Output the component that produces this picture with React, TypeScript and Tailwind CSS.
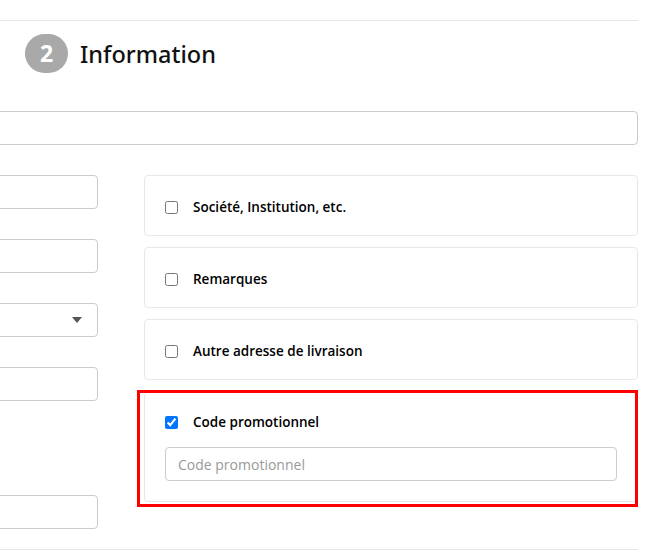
export default function App() {
  return (
    <div className="h-[556px] w-[650px] overflow-hidden bg-white font-['Open_Sans','Noto_Sans',sans-serif] text-[14px] text-black">
      <div className="-ml-[200px] w-[838px] pt-5">
        {/* Step header */}
        <div className="border-t border-[#e6e6e6] pt-[13px]">
          <div className="flex items-center gap-3 pl-[225px]">
            <span className="flex h-[39px] w-[43px] items-center justify-center rounded-full bg-[#a9a9a9] text-[23px] font-bold text-white">
              2
            </span>
            <h2 className="font-['Noto_Sans',sans-serif] text-[23.5px] font-medium leading-[30px] text-[#111]">
              Information
            </h2>
          </div>

          <input className="mt-[38px] block h-[34px] w-full rounded border border-[#cccccc] px-3 outline-none" />

          <div className="mt-[30px] flex gap-[46px]">
            {/* Left column */}
            <div className="flex w-[298px] flex-col gap-[30px]">
              <input className="block h-[34px] w-full rounded border border-[#cccccc] px-3 outline-none" />
              <input className="block h-[34px] w-full rounded border border-[#cccccc] px-3 outline-none" />
              <div className="flex h-[34px] w-full items-center justify-end rounded border border-[#cccccc] pr-[15px]">
                <svg width="10" height="6" viewBox="0 0 10 6">
                  <path d="M0 0h10L5 6z" fill="#555" />
                </svg>
              </div>
              <input className="block h-[34px] w-full rounded border border-[#cccccc] px-3 outline-none" />
              <div className="h-[34px]" />
              <input className="block h-[34px] w-full rounded border border-[#cccccc] px-3 outline-none" />
            </div>

            {/* Right column */}
            <div className="flex flex-1 flex-col gap-[11px]">
              {["Société, Institution, etc.", "Remarques", "Autre adresse de livraison"].map((label) => (
                <label
                  key={label}
                  className="flex h-[61px] items-center gap-[15px] rounded-sm border border-[#e8e8e8] pl-5 pt-[3px] text-[13.5px] font-semibold"
                >
                  <input type="checkbox" className="m-0 mt-[1px] h-[13px] w-[13px]" />
                  <span>{label}</span>
                </label>
              ))}

              <div className="relative rounded-sm border border-[#e8e8e8] px-5 pb-5 pt-[19px]">
                <label className="flex h-[22px] items-center gap-[15px] text-[13.5px] font-semibold">
                  <input type="checkbox" defaultChecked className="m-0 mt-[1px] h-[13px] w-[13px]" />
                  <span>Code promotionnel</span>
                </label>
                <input
                  placeholder="Code promotionnel"
                  className="mt-[14px] block h-[34px] w-full rounded border border-[#cccccc] px-3 placeholder:text-[#999] outline-none"
                />
                <div className="pointer-events-none absolute -bottom-[6px] -left-[8px] -right-[1px] -top-[2px] border-[3px] border-[#ff0000]" />
              </div>
            </div>
          </div>

          <div className="mt-5 border-t border-[#e6e6e6]" />
        </div>
      </div>
    </div>
  );
}
